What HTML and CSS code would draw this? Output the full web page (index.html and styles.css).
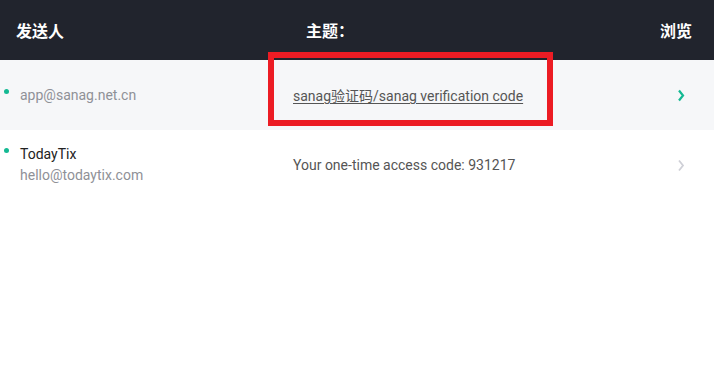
FILE: index.html
```html
<!DOCTYPE html>
<html lang="zh">
<head>
<meta charset="utf-8">
<title>Inbox</title>
<link rel="stylesheet" href="styles.css">
</head>
<body>
<div class="inbox">
  <div class="head">
    <div class="h-sender">发送人</div>
    <div class="h-subject">主题：</div>
    <div class="h-view">浏览</div>
  </div>
  <div class="row row-active">
    <div class="sender">
      <span class="dot"></span>
      <div class="who">
        <div class="addr">app@sanag.net.cn</div>
      </div>
    </div>
    <div class="subject"><span class="link">sanag验证码/sanag verification code</span></div>
    <div class="go">
      <svg width="8" height="13" viewBox="0 0 8 13"><path d="M2 1.5 L6 6.5 L2 11.5" fill="none" stroke="#14b993" stroke-width="2.2"/></svg>
    </div>
  </div>
  <div class="row">
    <div class="sender">
      <span class="dot"></span>
      <div class="who">
        <div class="name">TodayTix</div>
        <div class="addr">hello@todaytix.com</div>
      </div>
    </div>
    <div class="subject">Your one-time access code: 931217</div>
    <div class="go">
      <svg width="8" height="13" viewBox="0 0 8 13"><path d="M2 1.5 L6 6.5 L2 11.5" fill="none" stroke="#cfd0d7" stroke-width="1.8"/></svg>
    </div>
  </div>
  <div class="mark"></div>
</div>
</body>
</html>
```

FILE: styles.css
```css
html, body {
  margin: 0;
  padding: 0;
  background: #ffffff;
}
body {
  font-family: Roboto, "Noto Sans CJK SC", sans-serif;
  font-size: 14px;
}
.inbox {
  position: relative;
  width: 714px;
}
.head {
  height: 60px;
  background: #21242d;
  color: #ffffff;
  display: flex;
  align-items: center;
  font-family: "Noto Sans CJK SC", sans-serif;
  font-weight: 700;
  font-size: 16px;
  padding: 0 22px 0 16px;
}
.h-sender {
  width: 290px;
}
.h-subject {
  flex: 1;
}
.h-view {
  text-align: right;
}
.row {
  display: flex;
  align-items: center;
  height: 70px;
  padding-left: 4px;
}
.row-active {
  background: #f6f7f9;
}
.sender {
  width: 289px;
  display: flex;
  align-items: flex-start;
}
.dot {
  width: 5px;
  height: 5px;
  border-radius: 50%;
  background: #14b993;
  margin-top: 4px;
  margin-right: 11px;
  flex: none;
}
.who {
  line-height: 21px;
}
.name {
  color: #222222;
}
.addr {
  color: #8f9197;
}
.subject {
  flex: 1;
  color: #555555;
}
.link {
  text-decoration: underline;
  text-underline-offset: 2px;
}
.go {
  width: 37px;
  display: flex;
  align-items: center;
}
.go svg {
  display: block;
}
.mark {
  position: absolute;
  left: 268px;
  top: 52px;
  width: 273px;
  height: 62px;
  border: 6px solid #ec1c24;
  pointer-events: none;
}
```
